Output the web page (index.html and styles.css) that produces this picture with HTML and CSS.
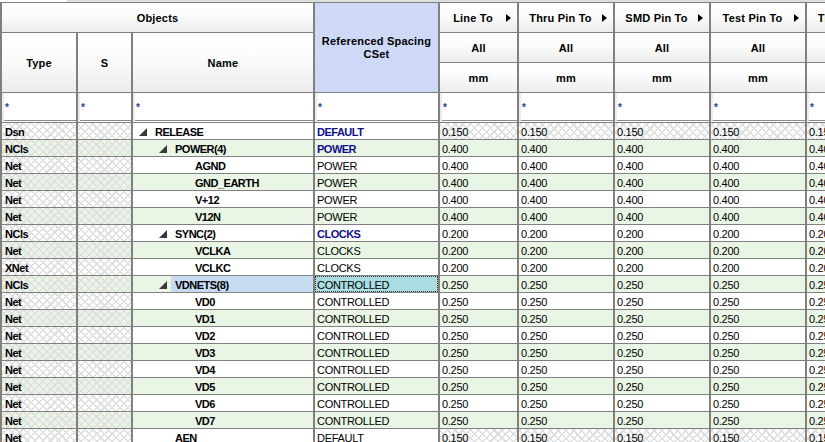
FILE: index.html
```html
<!DOCTYPE html>
<html>
<head>
<meta charset="utf-8">
<link rel="stylesheet" href="styles.css">
</head>
<body>
<div class="topstrip"></div>
<div class="sheet">
  <!-- header row 1 -->
  <div class="hdr span3">Objects</div>
  <div class="hdr refhdr">Referenced Spacing<br>CSet</div>
  <div class="hdr arrowed"><span class="lbl">Line To</span><svg class="arr" width="5" height="8" viewBox="0 0 5 8"><polygon points="0,0 5,4 0,8"/></svg></div>
  <div class="hdr arrowed"><span class="lbl">Thru Pin To</span><svg class="arr" width="5" height="8" viewBox="0 0 5 8"><polygon points="0,0 5,4 0,8"/></svg></div>
  <div class="hdr arrowed"><span class="lbl">SMD Pin To</span><svg class="arr" width="5" height="8" viewBox="0 0 5 8"><polygon points="0,0 5,4 0,8"/></svg></div>
  <div class="hdr arrowed"><span class="lbl">Test Pin To</span><svg class="arr" width="5" height="8" viewBox="0 0 5 8"><polygon points="0,0 5,4 0,8"/></svg></div>
  <div class="hdr arrowed"><span class="lbl">Thru Via To</span><svg class="arr" width="5" height="8" viewBox="0 0 5 8"><polygon points="0,0 5,4 0,8"/></svg></div>
  <!-- header row 2 -->
  <div class="hdr span2r">Type</div>
  <div class="hdr span2r">S</div>
  <div class="hdr span2r">Name</div>
  <div class="hdr">All</div>
  <div class="hdr">All</div>
  <div class="hdr">All</div>
  <div class="hdr">All</div>
  <div class="hdr">All</div>
  <!-- header row 3 -->
  <div class="hdr">mm</div>
  <div class="hdr">mm</div>
  <div class="hdr">mm</div>
  <div class="hdr">mm</div>
  <div class="hdr">mm</div>
  <!-- filter row -->
  <div class="flt">*</div>
  <div class="flt">*</div>
  <div class="flt">*</div>
  <div class="flt">*</div>
  <div class="flt">*</div>
  <div class="flt">*</div>
  <div class="flt">*</div>
  <div class="flt">*</div>
  <div class="flt">*</div>

  <!-- data -->
  <div class="row">
    <div class="c type ro">Dsn</div><div class="c ro"></div>
    <div class="c name l0"><svg class="tri" width="8" height="8" viewBox="0 0 8 8"><polygon points="8,0 8,8 0,8"/></svg><span class="lab">RELEASE</span></div>
    <div class="c ref grp">DEFAULT</div>
    <div class="c val ro">0.150</div><div class="c val ro">0.150</div><div class="c val ro">0.150</div><div class="c val ro">0.150</div><div class="c val ro">0.150</div>
  </div>
  <div class="row alt">
    <div class="c type ro">NCls</div><div class="c ro"></div>
    <div class="c name l1"><svg class="tri" width="8" height="8" viewBox="0 0 8 8"><polygon points="8,0 8,8 0,8"/></svg><span class="lab">POWER(4)</span></div>
    <div class="c ref grp">POWER</div>
    <div class="c val">0.400</div><div class="c val">0.400</div><div class="c val">0.400</div><div class="c val">0.400</div><div class="c val">0.400</div>
  </div>
  <div class="row">
    <div class="c type ro">Net</div><div class="c ro"></div>
    <div class="c name l2"><span class="slot"></span><span class="lab">AGND</span></div>
    <div class="c ref">POWER</div>
    <div class="c val">0.400</div><div class="c val">0.400</div><div class="c val">0.400</div><div class="c val">0.400</div><div class="c val">0.400</div>
  </div>
  <div class="row alt">
    <div class="c type ro">Net</div><div class="c ro"></div>
    <div class="c name l2"><span class="slot"></span><span class="lab">GND_EARTH</span></div>
    <div class="c ref">POWER</div>
    <div class="c val">0.400</div><div class="c val">0.400</div><div class="c val">0.400</div><div class="c val">0.400</div><div class="c val">0.400</div>
  </div>
  <div class="row">
    <div class="c type ro">Net</div><div class="c ro"></div>
    <div class="c name l2"><span class="slot"></span><span class="lab">V+12</span></div>
    <div class="c ref">POWER</div>
    <div class="c val">0.400</div><div class="c val">0.400</div><div class="c val">0.400</div><div class="c val">0.400</div><div class="c val">0.400</div>
  </div>
  <div class="row alt">
    <div class="c type ro">Net</div><div class="c ro"></div>
    <div class="c name l2"><span class="slot"></span><span class="lab">V12N</span></div>
    <div class="c ref">POWER</div>
    <div class="c val">0.400</div><div class="c val">0.400</div><div class="c val">0.400</div><div class="c val">0.400</div><div class="c val">0.400</div>
  </div>
  <div class="row">
    <div class="c type ro">NCls</div><div class="c ro"></div>
    <div class="c name l1"><svg class="tri" width="8" height="8" viewBox="0 0 8 8"><polygon points="8,0 8,8 0,8"/></svg><span class="lab">SYNC(2)</span></div>
    <div class="c ref grp">CLOCKS</div>
    <div class="c val">0.200</div><div class="c val">0.200</div><div class="c val">0.200</div><div class="c val">0.200</div><div class="c val">0.200</div>
  </div>
  <div class="row alt">
    <div class="c type ro">Net</div><div class="c ro"></div>
    <div class="c name l2"><span class="slot"></span><span class="lab">VCLKA</span></div>
    <div class="c ref">CLOCKS</div>
    <div class="c val">0.200</div><div class="c val">0.200</div><div class="c val">0.200</div><div class="c val">0.200</div><div class="c val">0.200</div>
  </div>
  <div class="row">
    <div class="c type ro">XNet</div><div class="c ro"></div>
    <div class="c name l2"><span class="slot"></span><span class="lab">VCLKC</span></div>
    <div class="c ref">CLOCKS</div>
    <div class="c val">0.200</div><div class="c val">0.200</div><div class="c val">0.200</div><div class="c val">0.200</div><div class="c val">0.200</div>
  </div>
  <div class="row alt">
    <div class="c type ro">NCls</div><div class="c ro"></div>
    <div class="c name l1"><svg class="tri" width="8" height="8" viewBox="0 0 8 8"><polygon points="8,0 8,8 0,8"/></svg><span class="lab sel">VDNETS(8)</span></div>
    <div class="c ref focus">CONTROLLED</div>
    <div class="c val">0.250</div><div class="c val">0.250</div><div class="c val">0.250</div><div class="c val">0.250</div><div class="c val">0.250</div>
  </div>
  <div class="row">
    <div class="c type ro">Net</div><div class="c ro"></div>
    <div class="c name l2"><span class="slot"></span><span class="lab">VD0</span></div>
    <div class="c ref">CONTROLLED</div>
    <div class="c val">0.250</div><div class="c val">0.250</div><div class="c val">0.250</div><div class="c val">0.250</div><div class="c val">0.250</div>
  </div>
  <div class="row alt">
    <div class="c type ro">Net</div><div class="c ro"></div>
    <div class="c name l2"><span class="slot"></span><span class="lab">VD1</span></div>
    <div class="c ref">CONTROLLED</div>
    <div class="c val">0.250</div><div class="c val">0.250</div><div class="c val">0.250</div><div class="c val">0.250</div><div class="c val">0.250</div>
  </div>
  <div class="row">
    <div class="c type ro">Net</div><div class="c ro"></div>
    <div class="c name l2"><span class="slot"></span><span class="lab">VD2</span></div>
    <div class="c ref">CONTROLLED</div>
    <div class="c val">0.250</div><div class="c val">0.250</div><div class="c val">0.250</div><div class="c val">0.250</div><div class="c val">0.250</div>
  </div>
  <div class="row alt">
    <div class="c type ro">Net</div><div class="c ro"></div>
    <div class="c name l2"><span class="slot"></span><span class="lab">VD3</span></div>
    <div class="c ref">CONTROLLED</div>
    <div class="c val">0.250</div><div class="c val">0.250</div><div class="c val">0.250</div><div class="c val">0.250</div><div class="c val">0.250</div>
  </div>
  <div class="row">
    <div class="c type ro">Net</div><div class="c ro"></div>
    <div class="c name l2"><span class="slot"></span><span class="lab">VD4</span></div>
    <div class="c ref">CONTROLLED</div>
    <div class="c val">0.250</div><div class="c val">0.250</div><div class="c val">0.250</div><div class="c val">0.250</div><div class="c val">0.250</div>
  </div>
  <div class="row alt">
    <div class="c type ro">Net</div><div class="c ro"></div>
    <div class="c name l2"><span class="slot"></span><span class="lab">VD5</span></div>
    <div class="c ref">CONTROLLED</div>
    <div class="c val">0.250</div><div class="c val">0.250</div><div class="c val">0.250</div><div class="c val">0.250</div><div class="c val">0.250</div>
  </div>
  <div class="row">
    <div class="c type ro">Net</div><div class="c ro"></div>
    <div class="c name l2"><span class="slot"></span><span class="lab">VD6</span></div>
    <div class="c ref">CONTROLLED</div>
    <div class="c val">0.250</div><div class="c val">0.250</div><div class="c val">0.250</div><div class="c val">0.250</div><div class="c val">0.250</div>
  </div>
  <div class="row alt">
    <div class="c type ro">Net</div><div class="c ro"></div>
    <div class="c name l2"><span class="slot"></span><span class="lab">VD7</span></div>
    <div class="c ref">CONTROLLED</div>
    <div class="c val">0.250</div><div class="c val">0.250</div><div class="c val">0.250</div><div class="c val">0.250</div><div class="c val">0.250</div>
  </div>
  <div class="row">
    <div class="c type ro">Net</div><div class="c ro"></div>
    <div class="c name l1"><span class="slot"></span><span class="lab">AEN</span></div>
    <div class="c ref">DEFAULT</div>
    <div class="c val ro">0.150</div><div class="c val ro">0.150</div><div class="c val ro">0.150</div><div class="c val ro">0.150</div><div class="c val ro">0.150</div>
  </div>
</div>
</body>
</html>
```

FILE: styles.css
```css
* { box-sizing: border-box; }
html, body {
  margin: 0;
  padding: 0;
  background: #ffffff;
  overflow: hidden;
}
body {
  width: 825px;
  height: 442px;
  font-family: "Liberation Sans", Arial, sans-serif;
  color: #000;
}
.topstrip {
  height: 2px;
  margin-left: 67px;
  background: #dedede;
}
.sheet {
  display: grid;
  grid-template-columns: 74px 53px 180px 123px 77px 94px 94px 94px 94px;
  grid-template-rows: 29px 29px 29px 29px;
  grid-auto-rows: 16px;
  column-gap: 2px;
  row-gap: 1px;
  background: #808080;
  padding: 1px 0 0 2px;
  width: max-content;
}
.hdr {
  display: flex;
  align-items: center;
  justify-content: center;
  text-align: center;
  font-size: 11px;
  font-weight: bold;
  letter-spacing: 0.2px;
  line-height: 13px;
  padding-top: 1px;
  background: linear-gradient(to bottom, #ffffff 0%, #fbfbfb 45%, #ececec 100%);
}
.span3 { grid-column: span 3; }
.span2r { grid-row: span 2; }
.refhdr {
  grid-row: span 3;
  background: #cdd9f7;
  padding-top: 1px;
}
.arrowed {
  padding-right: 6px;
}
.arrowed .lbl {
  flex: 1;
  text-align: center;
  white-space: nowrap;
}
.arr { flex: none; fill: #000; margin-top: -1px; }
.flt {
  background: #fff;
  font-size: 10px;
  font-weight: bold;
  color: #24428c;
  display: flex;
  align-items: center;
  padding-left: 3px;
  box-shadow: inset 2px 0 0 #ececec, inset 0 -1px 0 #ffffff, inset 0 -2px 0 #8a8a8a;
}
.row { display: contents; }
.c {
  background-color: #ffffff;
  font-size: 11px;
  letter-spacing: -0.3px;
  line-height: 16px;
  padding-left: 3px;
  padding-top: 1px;
  white-space: nowrap;
  overflow: hidden;
}
.row.alt > .c { background-color: #e9f6e5; }
.ro {
  background-image:
    repeating-linear-gradient(45deg, transparent 0 4px, #e0e0e0 4px 5.5px),
    repeating-linear-gradient(-45deg, transparent 0 4px, #e0e0e0 4px 5.5px);
}
.type { font-weight: bold; letter-spacing: -0.5px; }
.name {
  display: flex;
  align-items: center;
  font-weight: bold;
  letter-spacing: -0.5px;
  padding-left: 6px;
  padding-top: 0;
}
.name.l1 { padding-left: 26px; }
.name.l2 { padding-left: 46px; }
.tri { flex: none; width: 8px; height: 8px; fill: #3a3a3a; margin-right: 8px; margin-top: 1px; }
.slot { flex: none; width: 16px; }
.lab {
  flex: 1;
  align-self: stretch;
  line-height: 16px;
  padding-top: 1px;
}
.lab.sel {
  background: #c6dbf2;
  margin-left: -4px;
  padding-left: 4px;
}
.ref { padding-left: 2px; }
.ref.grp { font-weight: bold; letter-spacing: -0.5px; color: #10108a; }
.row.alt > .ref.focus {
  background-color: #a9dde2;
  outline: 1px dotted #333;
  outline-offset: -1px;
}
.val { padding-left: 2px; }
```
